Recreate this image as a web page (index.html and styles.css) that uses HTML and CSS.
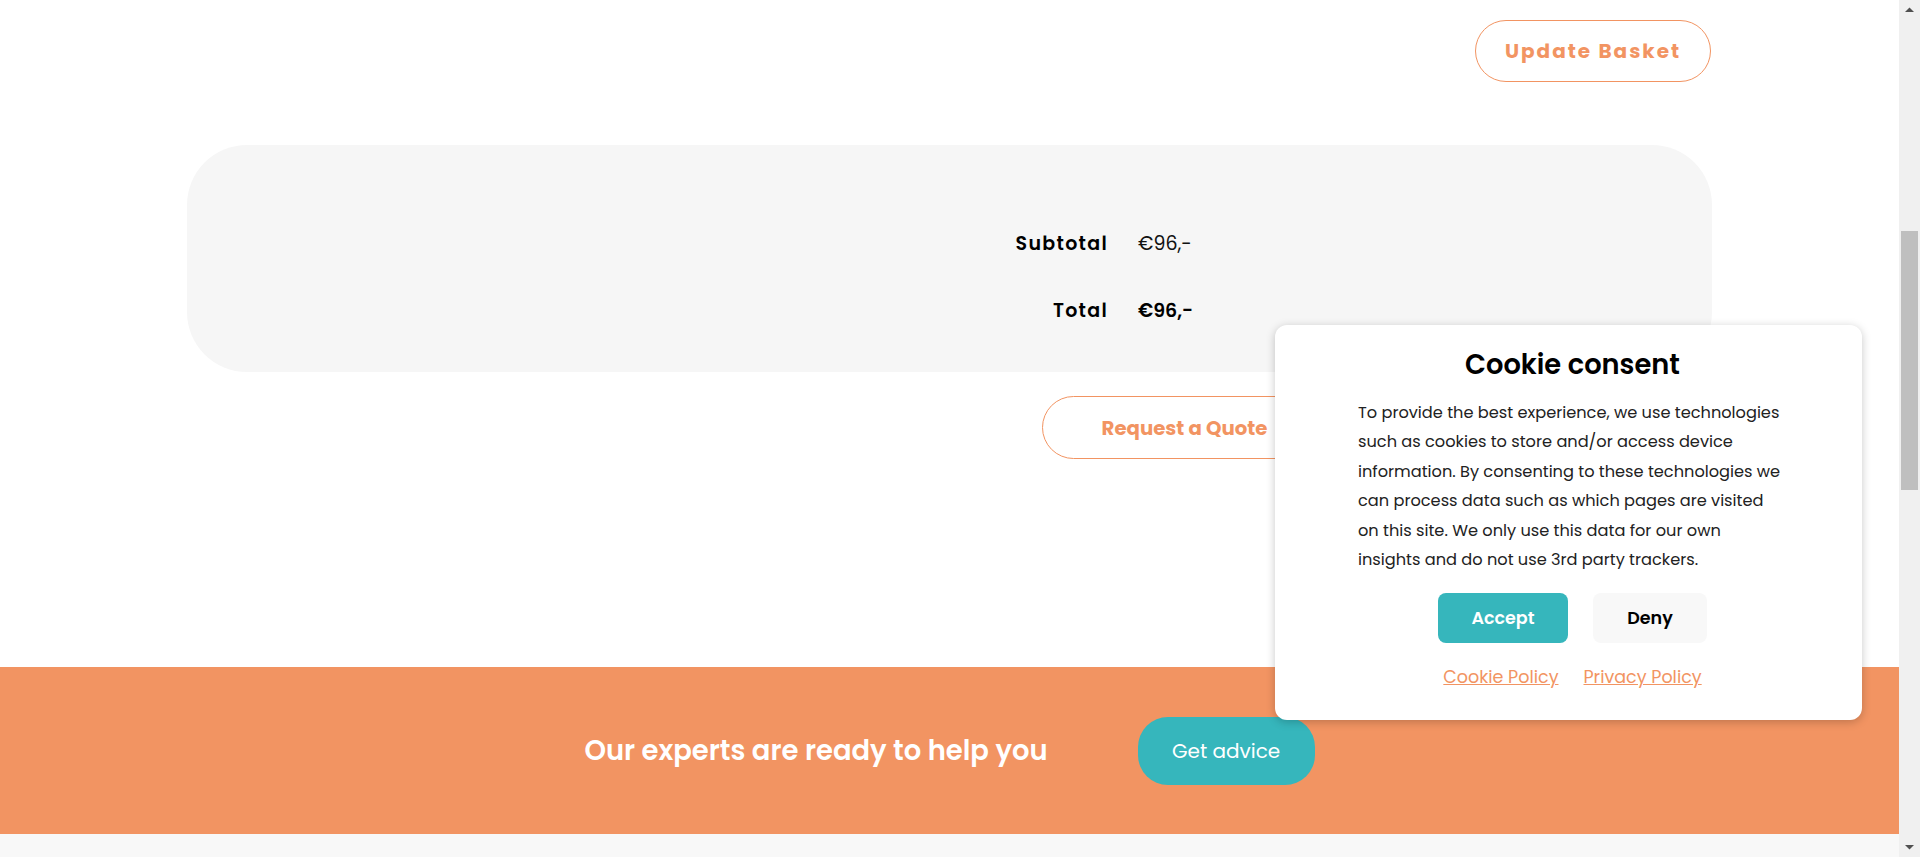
FILE: index.html
```html
<!DOCTYPE html>
<html lang="en">
<head>
<meta charset="utf-8">
<title>Basket</title>
<link rel="stylesheet" href="styles.css">
</head>
<body>
<div class="viewport">
  <main class="page">
    <section class="cart">
      <div class="cart-actions">
        <button class="btn-outline btn-update">Update Basket</button>
      </div>
      <div class="totals">
        <div class="totals-grid">
          <span class="t-label">Subtotal</span>
          <span class="t-value">€96,-</span>
          <span class="t-label">Total</span>
          <span class="t-value t-strong">€96,-</span>
        </div>
      </div>
      <div class="checkout">
        <button class="btn-outline btn-quote">Request a Quote</button>
      </div>
    </section>
    <section class="cta">
      <h2 class="cta-title">Our experts are ready to help you</h2>
      <a class="cta-btn" href="#">Get advice</a>
    </section>
    <div class="footer-strip"></div>
  </main>
  <div class="scrollbar">
    <svg class="sb-arrow" width="21" height="17" viewBox="0 0 21 17"><polygon points="6,12 15,12 10.5,7.5" fill="#505050"/></svg>
    <div class="sb-track"><div class="sb-thumb"></div></div>
    <svg class="sb-arrow" width="21" height="17" viewBox="0 0 21 17"><polygon points="6,5 15,5 10.5,9.5" fill="#505050"/></svg>
  </div>
</div>

<div class="cookie">
  <h3 class="cookie-title">Cookie consent</h3>
  <p class="cookie-text">To provide the best experience, we use technologies such as cookies to store and/or access device information. By consenting to these technologies we can process data such as which pages are visited on this site. We only use this data for our own insights and do not use 3rd party trackers.</p>
  <div class="cookie-buttons">
    <button class="cbtn cbtn-accept">Accept</button>
    <button class="cbtn cbtn-deny">Deny</button>
  </div>
  <div class="cookie-links">
    <a href="#">Cookie Policy</a>
    <a href="#">Privacy Policy</a>
  </div>
</div>
</body>
</html>
```
FILE: styles.css
```css
* { box-sizing: border-box; }
html, body { margin: 0; padding: 0; }
body {
  font-family: Poppins, "Open Sans", sans-serif;
  color: #111;
  background: #fff;
  height: 857px;
  overflow: hidden;
}
button { font: inherit; cursor: pointer; }

.viewport {
  display: flex;
  height: 857px;
}
.page {
  flex: 1;
  display: flex;
  flex-direction: column;
  min-width: 0;
}

/* cart */
.cart {
  flex: 1;
  width: 1525px;
  margin: 0 auto;
  padding-top: 20px;
}
.cart-actions {
  display: flex;
  justify-content: flex-end;
  padding-right: 1px;
}
.btn-outline {
  background: #fff;
  border: 1px solid #f29462;
  color: #f29462;
  border-radius: 32px;
  font-weight: 700;
}
.btn-update {
  width: 236px;
  height: 62px;
  font-size: 20px;
  letter-spacing: 2px;
}
.totals {
  margin-top: 63px;
  height: 227px;
  background: #f6f6f6;
  border-radius: 60px;
  padding-top: 85px;
}
.totals-grid {
  display: grid;
  grid-template-columns: 921px auto;
  column-gap: 30px;
  row-gap: 40px;
  font-size: 19px;
  line-height: 27px;
}
.t-label {
  text-align: right;
  font-weight: 600;
  letter-spacing: 1.3px;
  color: #000;
}
.t-value { color: #111; }
.t-strong { font-weight: 600; color: #000; }

.checkout {
  margin-top: 24px;
  padding-left: 855px;
}
.btn-quote {
  width: 285px;
  height: 63px;
  font-size: 19.7px;
}

/* call to action */
.cta {
  height: 167px;
  background: #f29462;
  display: flex;
  align-items: center;
  justify-content: center;
  gap: 90px;
}
.cta-title {
  margin: 0;
  color: #fff;
  font-size: 27.4px;
  font-weight: 600;
}
.cta-btn {
  display: flex;
  align-items: center;
  justify-content: center;
  width: 177px;
  height: 68px;
  border-radius: 30px;
  background: #36b6bc;
  color: #fff;
  text-decoration: none;
  font-size: 20px;
}
.footer-strip {
  height: 23px;
  background: #f8f8f8;
}

/* scrollbar */
.scrollbar {
  width: 21px;
  background: #f0f0f0;
  display: flex;
  flex-direction: column;
}
.sb-arrow { display: block; flex: none; }
.sb-track {
  flex: 1;
  padding: 214px 2px 0 2px;
}
.sb-thumb {
  height: 259px;
  background: #bfbfbf;
}

/* cookie consent */
.cookie {
  position: absolute;
  left: 1275px;
  top: 325px;
  width: 587px;
  height: 395px;
  background: #fff;
  border-radius: 12px;
  box-shadow: 0 2px 10px rgba(0, 0, 0, 0.22);
  padding: 22px 0 0 8px;
  display: flex;
  flex-direction: column;
  align-items: center;
}
.cookie-title {
  margin: 0;
  font-size: 27.3px;
  line-height: 36px;
  font-weight: 600;
  color: #000;
}
.cookie-text {
  margin: 15px 0 0 75px;
  align-self: flex-start;
  width: 427px;
  font-size: 16.2px;
  line-height: 29.4px;
  color: #222;
}
.cookie-buttons {
  margin-top: 19px;
  display: flex;
  gap: 25px;
}
.cbtn {
  height: 50px;
  border: 0;
  border-radius: 8px;
  font-size: 17.5px;
  font-weight: 600;
}
.cbtn-accept {
  width: 130px;
  background: #36b6bc;
  color: #fff;
}
.cbtn-deny {
  width: 114px;
  background: #f8f8f8;
  color: #000;
}
.cookie-links {
  margin-top: 22px;
  display: flex;
  gap: 25px;
  font-size: 17.5px;
  line-height: 24px;
}
.cookie-links a {
  color: #f29462;
  text-decoration: underline;
}
```
